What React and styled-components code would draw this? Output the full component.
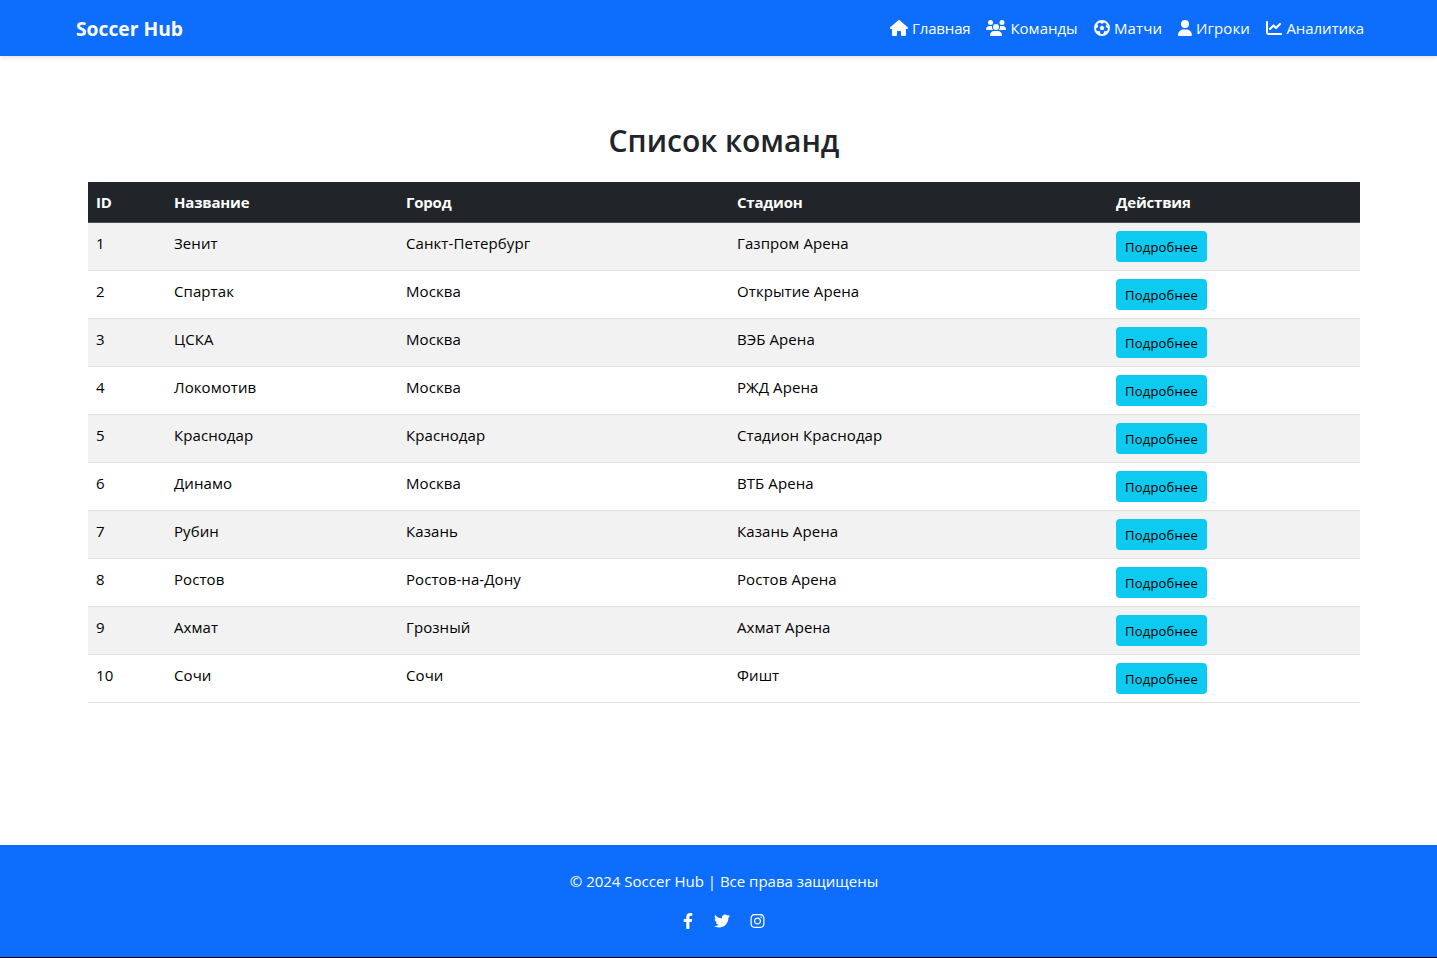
import React from 'react';
import styled, { createGlobalStyle } from 'styled-components';
import { FaHouse, FaUsers, FaFutbol, FaUser, FaChartLine } from 'react-icons/fa6';
import { FaFacebookF, FaTwitter, FaInstagram } from 'react-icons/fa';

const Global = createGlobalStyle`
  *, *::before, *::after { box-sizing: border-box; }
  body { margin: 0; font: 400 15px/24px "Open Sans", "Noto Sans", sans-serif; color: #212529; background: #fff; overflow: hidden; }
`;
const Page = styled.div`
  height: 958px;
  display: flex;
  flex-direction: column;
  border-bottom: 1px solid #000;
`;
const Navbar = styled.header`
  height: 56px;
  flex: none;
  padding: 0 73px 0 76px;
  display: flex;
  align-items: center;
  justify-content: space-between;
  background: #0d6efd;
  color: #fff;
  box-shadow: 0 2px 4px rgba(0, 0, 0, 0.1);
`;
const Brand = styled.a`
  padding-top: 2px;
  font-size: 19.25px;
  font-weight: 700;
  line-height: 30px;
`;
const Nav = styled.nav`
  display: flex;
  gap: 16px;
`;
const NavLink = styled.a`
  display: flex;
  align-items: center;
  gap: 4.4px;
  white-space: nowrap;
`;
const NavLabel = styled.span`
  width: ${p => p.$width}px;
  letter-spacing: ${p => p.$spacing || 0}px;
`;
const IconBox = styled.span`
  display: flex;
  flex: none;
  width: ${p => p.$width}px;
  height: 16px;
  svg { width: 100%; height: 100%; }
`;
const Main = styled.main`
  flex: 1;
  padding: 66px 77px 0 88px;
`;
const Title = styled.h2`
  margin: 0 0 22px;
  font-size: 30px;
  font-weight: 600;
  line-height: 38px;
  text-align: center;
`;
const Table = styled.table`
  width: 100%;
  border-collapse: separate;
  border-spacing: 0;
  table-layout: fixed;
  color: #000;
  letter-spacing: 0.08px;
`;
const Th = styled.th`
  height: 41px;
  padding: 8px;
  text-align: left;
  vertical-align: top;
  font-weight: 700;
  letter-spacing: -0.2px;
  color: #fff;
  background: #212529;
  border-bottom: 1px solid #4d5154;
`;
const Row = styled.tr`
  height: 48px;
  &:nth-child(odd) { background: #f2f2f2; }
`;
const Td = styled.td`
  padding: 8px 8px 7px;
  vertical-align: top;
  border-bottom: 1px solid #dee2e6;
`;
const Details = styled.button`
  display: block;
  width: 91px;
  height: 31px;
  padding: 1px 0 0;
  border: 0;
  border-radius: 4px;
  background: #0dcaf0;
  color: #000;
  font: 400 13px/21px "Open Sans", "Noto Sans", sans-serif;
  letter-spacing: 0.2px;
`;
const Footer = styled.footer`
  height: 112px;
  flex: none;
  padding: 24px 0 0 11px;
  display: flex;
  flex-direction: column;
  align-items: center;
  gap: 16px;
  background: #0d6efd;
  color: #fff;
`;
const Socials = styled.div`
  display: flex;
  align-items: center;
  gap: 20.4px;
  height: 24px;
`;

const links = [
  { Icon: FaHouse, icon: 18, label: 'Главная', width: 58, spacing: -0.15 },
  { Icon: FaUsers, icon: 20, label: 'Команды', width: 67.2 },
  { Icon: FaFutbol, icon: 16, label: 'Матчи', width: 47.6, spacing: 0.1 },
  { Icon: FaUser, icon: 14, label: 'Игроки', width: 54, spacing: 0.1 },
  { Icon: FaChartLine, icon: 16, label: 'Аналитика', width: 77.6, spacing: -0.05 },
];
const teams = [
  ['Зенит', 'Санкт-Петербург', 'Газпром Арена'],
  ['Спартак', 'Москва', 'Открытие Арена'],
  ['ЦСКА', 'Москва', 'ВЭБ Арена'],
  ['Локомотив', 'Москва', 'РЖД Арена'],
  ['Краснодар', 'Краснодар', 'Стадион Краснодар'],
  ['Динамо', 'Москва', 'ВТБ Арена'],
  ['Рубин', 'Казань', 'Казань Арена'],
  ['Ростов', 'Ростов-на-Дону', 'Ростов Арена'],
  ['Ахмат', 'Грозный', 'Ахмат Арена'],
  ['Сочи', 'Сочи', 'Фишт'],
];

export default function App() {
  return (
    <Page>
      <Global />
      <Navbar>
        <Brand>Soccer Hub</Brand>
        <Nav>
          {links.map(({ Icon, icon, label, width, spacing }) => (
            <NavLink key={label}>
              <IconBox $width={icon}><Icon /></IconBox>
              <NavLabel $width={width} $spacing={spacing}>{label}</NavLabel>
            </NavLink>
          ))}
        </Nav>
      </Navbar>
      <Main>
        <Title>Список команд</Title>
        <Table>
          <colgroup><col width="78" /><col width="232" /><col width="331" /><col width="379" /><col width="252" /></colgroup>
          <thead><tr>{['ID', 'Название', 'Город', 'Стадион', 'Действия'].map(h => <Th key={h}>{h}</Th>)}</tr></thead>
          <tbody>
            {teams.map((t, i) => (
              <Row key={t[0]}>
                <Td>{i + 1}</Td>
                {t.map((c, j) => <Td key={j}>{c}</Td>)}
                <Td><Details>Подробнее</Details></Td>
              </Row>
            ))}
          </tbody>
        </Table>
      </Main>
      <Footer>
        <span>© 2024 Soccer Hub | Все права защищены</span>
        <Socials>
          <IconBox $width={10}><FaFacebookF /></IconBox>
          <IconBox $width={16}><FaTwitter /></IconBox>
          <IconBox $width={15}><FaInstagram /></IconBox>
        </Socials>
      </Footer>
    </Page>
  );
}
